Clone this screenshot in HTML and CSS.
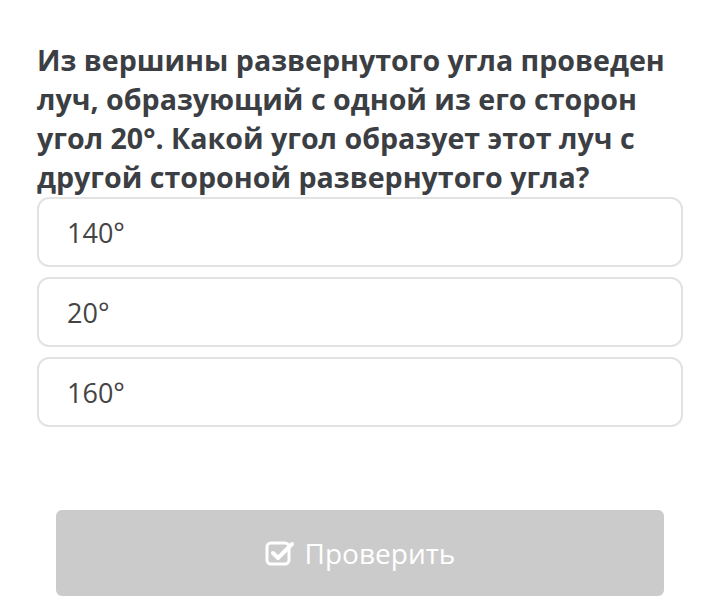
FILE: index.html
```html
<!DOCTYPE html>
<html lang="ru">
  <head>
    <meta charset="utf-8">
    <title>Тест</title>
    <link rel="stylesheet" href="styles.css">
  </head>
  <body>
    <div class="quiz">
      <h1 class="question">Из вершины развернутого угла проведен луч, образующий с одной из его сторон угол 20°. Какой угол образует этот луч с другой стороной развернутого угла?</h1>
      <div class="answers">
        <div class="answer">140°</div>
        <div class="answer">20°</div>
        <div class="answer">160°</div>
      </div>
      <button class="check" type="button">
        <svg width="30" height="28" viewBox="0 0 30 28">
          <rect x="2" y="4" width="22" height="21" rx="4" fill="none" stroke="#fff" stroke-width="3"/>
          <path d="M8 14 L13 19 L27 5" fill="none" stroke="#fff" stroke-width="4" stroke-linecap="round" stroke-linejoin="round"/>
        </svg>
        Проверить
      </button>
    </div>
  </body>
</html>
```

FILE: styles.css
```css
body{
  margin: 0;
  background-color: #ffffff;
  font-family: "Open Sans", "Noto Sans", sans-serif;
}
.quiz{
  padding: 40px 37px 0 37px;
}
.question{
  margin: 0;
  font-size: 28.6px;
  line-height: 39px;
  font-weight: 700;
  color: #3b3e43;
}
.answers{
  display: flex;
  flex-direction: column;
  gap: 10px;
  margin-top: 1px;
  width: 646px;
}
.answer{
  height: 66px;
  border: 2px solid #e3e3e3;
  border-radius: 12px;
  padding-left: 28px;
  display: flex;
  align-items: center;
  font-size: 27px;
  color: #444444;
}
.check{
  display: flex;
  align-items: center;
  justify-content: center;
  gap: 10px;
  margin: 83px 0 0 19px;
  width: 608px;
  height: 86px;
  border: none;
  border-radius: 6px;
  background-color: #cbcbcb;
  color: #ffffff;
  font-family: "Open Sans", "Noto Sans", sans-serif;
  font-size: 28px;
  padding: 0;
}
```
